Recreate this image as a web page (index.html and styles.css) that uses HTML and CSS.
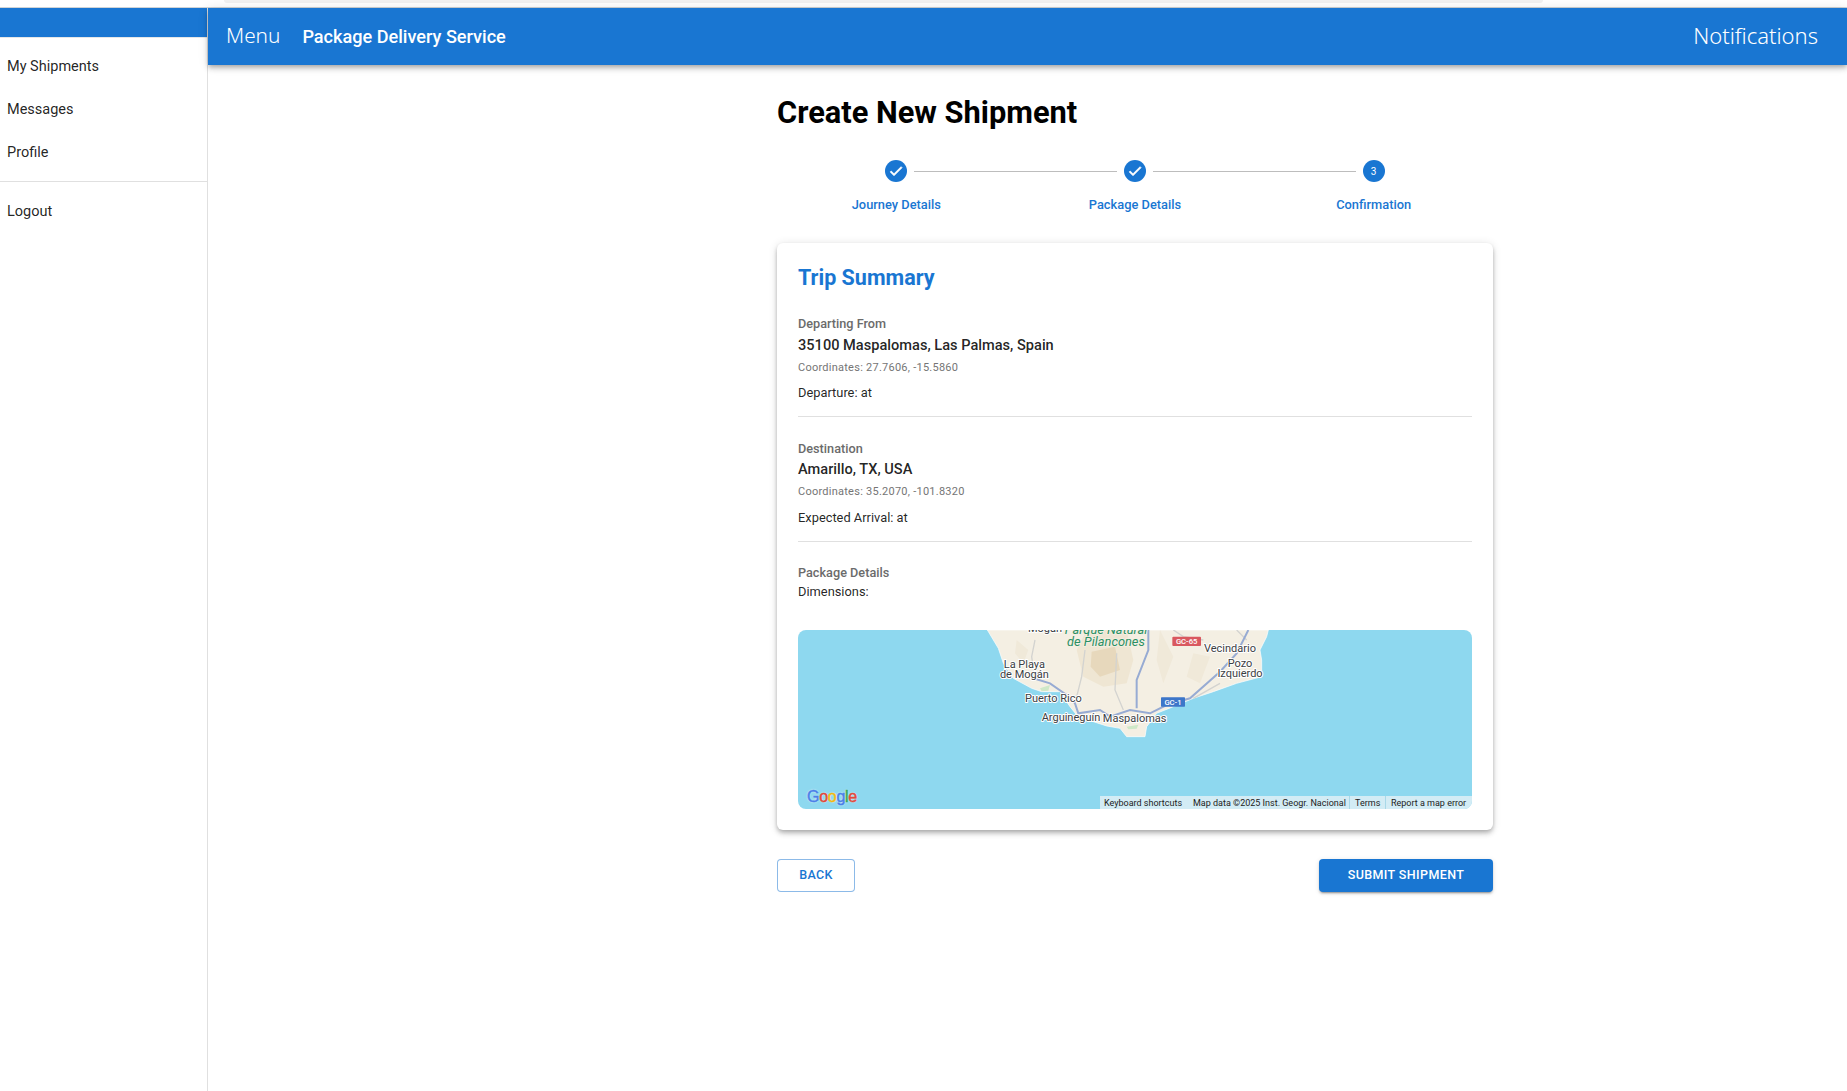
FILE: index.html
```html
<!DOCTYPE html>
<html lang="en">
<head>
<meta charset="utf-8">
<title>Create New Shipment</title>
<link rel="stylesheet" href="styles.css">
</head>
<body>
<div class="topstrip"><div class="pill"></div></div>
<div class="app">
  <aside class="sidebar">
    <div class="side-band"></div>
    <nav class="side-list">
      <a class="side-item">My Shipments</a>
      <a class="side-item">Messages</a>
      <a class="side-item">Profile</a>
    </nav>
    <hr class="side-divider">
    <a class="side-item logout">Logout</a>
  </aside>
  <div class="main">
    <header class="appbar">
      <span class="bar-link bar-menu">Menu</span>
      <span class="bar-title">Package Delivery Service</span>
      <span class="bar-link bar-right">Notifications</span>
    </header>
    <main class="content">
      <h1 class="page-title">Create New Shipment</h1>
      <div class="stepper">
        <div class="step">
          <span class="step-dot"><svg width="16" height="16" viewBox="0 0 24 24"><path d="M9 16.2 4.8 12l-1.4 1.4L9 19 21 7l-1.4-1.4z" fill="#fff" stroke="#fff" stroke-width="1.2"/></svg></span>
          <span class="step-label">Journey Details</span>
        </div>
        <div class="step">
          <span class="step-line"></span>
          <span class="step-dot"><svg width="16" height="16" viewBox="0 0 24 24"><path d="M9 16.2 4.8 12l-1.4 1.4L9 19 21 7l-1.4-1.4z" fill="#fff" stroke="#fff" stroke-width="1.2"/></svg></span>
          <span class="step-label">Package Details</span>
        </div>
        <div class="step">
          <span class="step-line"></span>
          <span class="step-dot">3</span>
          <span class="step-label">Confirmation</span>
        </div>
      </div>
      <section class="card">
        <h2 class="card-title">Trip Summary</h2>
        <div class="block">
          <div class="label">Departing From</div>
          <div class="place">35100 Maspalomas, Las Palmas, Spain</div>
          <div class="coords">Coordinates: 27.7606, -15.5860</div>
          <div class="detail">Departure: at</div>
        </div>
        <hr class="divider">
        <div class="block">
          <div class="label">Destination</div>
          <div class="place">Amarillo, TX, USA</div>
          <div class="coords">Coordinates: 35.2070, -101.8320</div>
          <div class="detail">Expected Arrival: at</div>
        </div>
        <hr class="divider">
        <div class="block">
          <div class="label">Package Details</div>
          <div class="dims">Dimensions:</div>
        </div>
        <div class="map">
          <svg class="map-svg" width="675" height="179" viewBox="0 0 675 179">
            <g transform="translate(162 -10) scale(.33333)">
              <path d="M82 30 115 85 130 130 160 175 215 205 245 215 300 215 330 260 350 285 400 305 440 318 480 325 500 350 555 350 560 320 590 280 640 260 700 235 760 215 830 190 905 170 905 120 900 90 920 50 925 30Z" fill="#f4efe3" stroke="#fff" stroke-width="2"/>
              <path d="M380 30 500 30 520 120 500 190 430 200 370 170 350 90Z" fill="#efe6d3"/>
              <path d="M395 95 465 80 480 150 420 170 392 140Z" fill="#e7d8bc"/>
              <path d="M600 30 640 110 610 190 590 120ZM700 100 750 110 720 190 680 170ZM170 60 205 90 190 130 165 100Z" fill="#f0e9d9"/>
              <path d="M500 320 535 314 530 326 505 328Z" fill="#cfe8c8"/>
              <path d="M240 205 270 195 265 212 245 214Z" fill="#cfe8c8"/>
              <path d="M225 60 215 110 225 180M375 90 365 170 345 250M470 100 465 210 490 270M640 30 670 50 730 60M830 30 860 60M700 235 780 190" class="road-minor"/>
              <path d="M565 30 565 90 530 180 530 265M345 250 355 280 420 270 450 290 510 270 570 280 620 255 690 235 780 155 830 100 865 30M220 175 270 190 320 225 345 250" class="road"/>
              <rect x="637" y="50" width="86" height="28" rx="3" fill="#d9585f"/>
              <text x="680" y="72" class="shield">GC-65</text>
              <rect x="603" y="232" width="72" height="28" rx="2" fill="#3c76c9"/>
              <text x="639" y="254" class="shield">GC-1</text>
              <text x="255" y="36" class="town">Mogán</text>
              <text x="438" y="42" class="park">Parque Natural</text>
              <text x="438" y="77" class="park">de Pilancones</text>
              <text x="193" y="143" class="town">La Playa</text>
              <text x="193" y="175" class="town">de Mogán</text>
              <text x="280" y="245" class="town">Puerto Rico</text>
              <text x="333" y="302" class="town">Arguineguín</text>
              <text x="524" y="307" class="town">Maspalomas</text>
              <text x="810" y="95" class="town">Vecindario</text>
              <text x="840" y="140" class="town">Pozo</text>
              <text x="840" y="172" class="town">Izquierdo</text>
            </g>
          </svg>
          <div class="google"><span class="g-b">G</span><span class="g-r">o</span><span class="g-y">o</span><span class="g-b">g</span><span class="g-g">l</span><span class="g-r">e</span></div>
          <div class="attrib">
            <span class="att-item att-keys">Keyboard shortcuts</span>
            <span class="att-item att-data">Map data ©2025 Inst. Geogr. Nacional</span>
            <span class="att-item att-terms">Terms</span>
            <span class="att-item att-report">Report a map error</span>
          </div>
        </div>
      </section>
      <div class="actions">
        <button class="btn btn-outline">Back</button>
        <button class="btn btn-fill">Submit Shipment</button>
      </div>
    </main>
  </div>
</div>
</body>
</html>
```
FILE: styles.css
```css
* { box-sizing: border-box; }
html, body { margin: 0; height: 100%; background: #fff; overflow: hidden; }
body { font-family: Roboto, "Liberation Sans", sans-serif; color: rgba(0,0,0,.87); display: flex; flex-direction: column; }

.topstrip { height: 8px; flex: none; padding-left: 224px; border-bottom: 1px solid #cfd3d6; }
.pill { width: 1319px; height: 3px; background: #f1f1f1; border-radius: 0 0 6px 6px; }

.app { flex: 1; display: flex; min-height: 0; }

.sidebar { width: 208px; flex: none; border-right: 1px solid #e0e0e0; display: flex; flex-direction: column; }
.side-band { height: 30px; background: #1976d2; border-bottom: 1px solid #e4e6e8; flex: none; }
.side-list { padding-top: 7px; }
.side-item { display: flex; align-items: center; height: 43px; padding-left: 7px; font-size: 14.5px; color: rgba(0,0,0,.87); }
.side-divider { border: 0; border-top: 1px solid #e0e0e0; margin: 7px 0 8px; }

.main { flex: 1; min-width: 0; display: flex; flex-direction: column; }
.appbar { height: 57px; flex: none; background: #1976d2; color: #fff; display: flex; align-items: center; padding: 0 29px 0 18px; box-shadow: 0 2px 4px -1px rgba(0,0,0,.2), 0 4px 5px rgba(0,0,0,.14), 0 1px 10px rgba(0,0,0,.12); position: relative; }
.bar-link { font-family: "Noto Sans", sans-serif; font-weight: 300; font-size: 22px; line-height: 28px; padding-bottom: 3px; }
.bar-menu { font-size: 20.8px; }
.bar-title { font-size: 18.1px; font-weight: 500; margin-left: 22px; }
.bar-right { margin-left: auto; }

.content { width: 716px; margin-left: 569px; }
.page-title { margin: 28px 0 0; font-size: 30.8px; line-height: 40px; font-weight: 700; color: #000; }

.stepper { display: grid; grid-template-columns: repeat(3, 1fr); margin-top: 27px; }
.step { position: relative; display: flex; flex-direction: column; align-items: center; }
.step-dot { width: 22px; height: 22px; border-radius: 50%; background: #1976d2; color: #fff; font-size: 10px; display: flex; align-items: center; justify-content: center; }
.step-label { margin-top: 14px; font-size: 12.85px; line-height: 18px; font-weight: 500; color: #1976d2; }
.step-line { position: absolute; top: 11px; left: calc(-50% + 18px); right: calc(50% + 18px); height: 1px; background: #bdbdbd; }

.card { margin-top: 29px; background: #fff; border-radius: 6px; padding: 21px 21px 21px; box-shadow: 0 2px 4px -1px rgba(0,0,0,.2), 0 4px 5px rgba(0,0,0,.14), 0 1px 10px rgba(0,0,0,.12); }
.card-title { margin: 0 0 3px; font-size: 21.5px; line-height: 28px; font-weight: 700; color: #1976d2; }

.block { padding-top: 20px; }
.label { font-size: 12.7px; line-height: 18px; font-weight: 500; color: #6b6b6b; }
.place { font-size: 14.6px; line-height: 24px; font-weight: 500; color: rgba(0,0,0,.87); }
.coords { font-size: 11px; line-height: 18px; color: #757575; letter-spacing: .25px; margin-top: 2px; }
.detail { font-size: 12.85px; line-height: 20px; margin-top: 6px; }
.dims { font-size: 12.85px; line-height: 20px; }
.divider { border: 0; border-top: 1px solid #e0e0e0; margin: 13px 0 3px; }
.divider + .block + .divider { margin-bottom: 2px; }
.divider + .block .place { margin-top: -1px; }
.divider + .block .detail { margin-top: 7px; }

.map { position: relative; height: 179px; margin-top: 28px; background: #8ed8ef; border-radius: 8px; overflow: hidden; }
.map-svg { display: block; }
.road { fill: none; stroke: #97abd3; stroke-width: 6; }
.road-minor { fill: none; stroke: #d3d3d0; stroke-width: 4; }
.town { font-size: 33px; font-family: Roboto, sans-serif; text-anchor: middle; fill: #3c4043; stroke: #fff; stroke-width: 6; paint-order: stroke; stroke-linejoin: round; }
.park { font-size: 38.5px; font-family: Roboto, sans-serif; font-style: italic; text-anchor: middle; fill: #2b8f63; stroke: #f4efe3; stroke-width: 5; paint-order: stroke; }
.shield { font-size: 23px; font-family: Roboto, sans-serif; font-weight: 500; text-anchor: middle; fill: #fff; }
.google { position: absolute; left: 9px; bottom: 3px; font-family: "Liberation Sans", sans-serif; font-size: 16px; letter-spacing: -.3px; -webkit-text-stroke: .5px currentColor; text-shadow: 0 0 2px #fff; }
.g-b { color: #4a80e8; }
.g-r { color: #e2483a; }
.g-y { color: #f2b90f; }
.g-g { color: #34a853; }
.attrib { position: absolute; right: 0; bottom: 0; left: 302px; height: 13px; background: #d3ecf5; font-size: 9px; line-height: 15px; color: #222; display: flex; }
.att-item { white-space: nowrap; flex: none; }
.att-keys { width: 89px; padding-left: 4px; }
.att-data { width: 161px; padding-left: 4px; border-right: 1px solid #a9d8e8; }
.att-terms { width: 36px; padding-left: 5px; border-right: 1px solid #a9d8e8; }
.att-report { padding-left: 5px; }

.actions { display: flex; justify-content: space-between; margin-top: 29px; }
.btn { height: 33px; border-radius: 4px; font-family: Roboto, sans-serif; font-size: 12.5px; font-weight: 500; letter-spacing: .4px; text-transform: uppercase; padding: 0 0 2px; }
.btn-outline { width: 78px; background: #fff; color: #1976d2; border: 1px solid rgba(25,118,210,.5); }
.btn-fill { width: 174px; background: #1976d2; color: #fff; border: 0; box-shadow: 0 3px 1px -2px rgba(0,0,0,.2), 0 2px 2px rgba(0,0,0,.14), 0 1px 5px rgba(0,0,0,.12); }
```
